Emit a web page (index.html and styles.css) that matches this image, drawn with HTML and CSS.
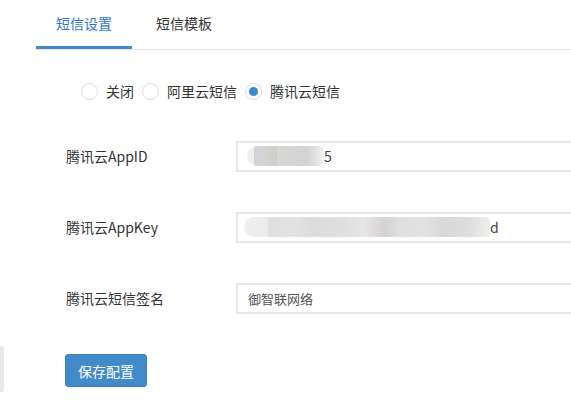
FILE: index.html
```html
<!DOCTYPE html>
<html lang="zh">
<head>
<meta charset="utf-8">
<link rel="stylesheet" href="styles.css">
</head>
<body>
<div class="edge"></div>
<div class="tabs">
  <div class="tab active">短信设置</div>
  <div class="tab">短信模板</div>
</div>
<div class="form">
  <div class="radios">
    <label class="radio"><span class="circle"></span><span>关闭</span></label>
    <label class="radio"><span class="circle"></span><span>阿里云短信</span></label>
    <label class="radio"><span class="circle checked"></span><span>腾讯云短信</span></label>
  </div>
  <div class="row">
    <div class="label">腾讯云AppID</div>
    <div class="input"><span class="blur blur-id"></span><span class="tail">5</span></div>
  </div>
  <div class="row">
    <div class="label">腾讯云AppKey</div>
    <div class="input"><span class="blur blur-key"></span><span class="tail">d</span></div>
  </div>
  <div class="row">
    <div class="label">腾讯云短信签名</div>
    <div class="input"><span class="val">御智联网络</span></div>
  </div>
  <button class="btn">保存配置</button>
</div>
</body>
</html>
```

FILE: styles.css
```css
html, body {
  margin: 0;
  padding: 0;
  background: #fff;
  width: 571px;
  height: 415px;
  overflow: hidden;
  position: relative;
  font-family: "Noto Sans CJK SC", "Noto Sans", sans-serif;
  font-size: 14px;
  color: #333;
}
.edge {
  position: absolute;
  left: 0;
  top: 346px;
  width: 4px;
  height: 46px;
  background: #e9e9e9;
  border-radius: 0 3px 3px 0;
}
.tabs {
  display: flex;
  margin-left: 36px;
  border-bottom: 1px solid #e6e6e6;
}
.tab {
  width: 96px;
  height: 46px;
  line-height: 46px;
  text-align: center;
  border-bottom: 3px solid transparent;
  color: #333;
}
.tab + .tab {
  margin-left: 4px;
}
.tab.active {
  color: #2f78c8;
  border-bottom-color: #4089cd;
}
.form {
  padding-left: 65px;
}
.radios {
  display: flex;
  align-items: center;
  height: 20px;
  margin-top: 31px;
  padding-left: 16px;
}
.radio {
  display: flex;
  align-items: center;
  margin-right: 8px;
}
.circle {
  box-sizing: border-box;
  width: 17px;
  height: 17px;
  border: 1px solid #dcdcdc;
  border-radius: 50%;
  margin-right: 8px;
  display: flex;
  align-items: center;
  justify-content: center;
}
.circle.checked::after {
  content: "";
  width: 9px;
  height: 9px;
  border-radius: 50%;
  background: #3c88d0;
}
.row {
  display: flex;
  align-items: center;
  height: 30px;
  margin-top: 41px;
}
.radios + .row {
  margin-top: 40px;
}
.label {
  flex: 0 0 171px;
  white-space: nowrap;
  padding-left: 1px;
  box-sizing: border-box;
}
.input {
  box-sizing: border-box;
  flex: 1 1 auto;
  min-width: 0;
  height: 31px;
  border: 2px solid #e6e6eb;
  border-right: none;
  display: flex;
  align-items: center;
  padding-left: 8px;
  color: #555;
  font-size: 13px;
}
.blur {
  display: block;
  height: 20px;
  border-radius: 10px 4px 4px 10px;
  filter: blur(0.6px);
}
.blur-id {
  width: 77px;
  margin-left: 1px;
  background: linear-gradient(90deg, #f3eeea 0, #f3eeea 7px, #d3d4d8 7px, #d3d4d8 16px, #d6d4d3 16px, #cecdcc 30px, #d8d7d6 30px, #d3d3d3 60px, #e4e4e4 70px, #f5f5f5 77px);
}
.blur-key {
  width: 246px;
  margin-left: -2px;
  background: linear-gradient(90deg, #efefef 0, #ebebeb 24px, #dfdfdf 24px, #e2e2e2 50px, #dcdcdc 70px, #dfdfdf 100px, #e6e6e6 120px, #d6d2d1 140px, #dedfdf 155px, #e2e2e2 180px, #d7d8d8 200px, #dedede 225px, #eeeeee 246px);
}
.tail {
  font-size: 14px;
  color: #444;
  margin-left: 0;
}
.val {
  padding-left: 2px;
}
.btn {
  display: block;
  margin-top: 41px;
  width: 82px;
  height: 33px;
  background: #428bca;
  border: 1px solid #3b80be;
  border-radius: 3px;
  color: #fff;
  font-family: "Noto Sans CJK SC", sans-serif;
  font-size: 14px;
  padding: 0;
}
```
